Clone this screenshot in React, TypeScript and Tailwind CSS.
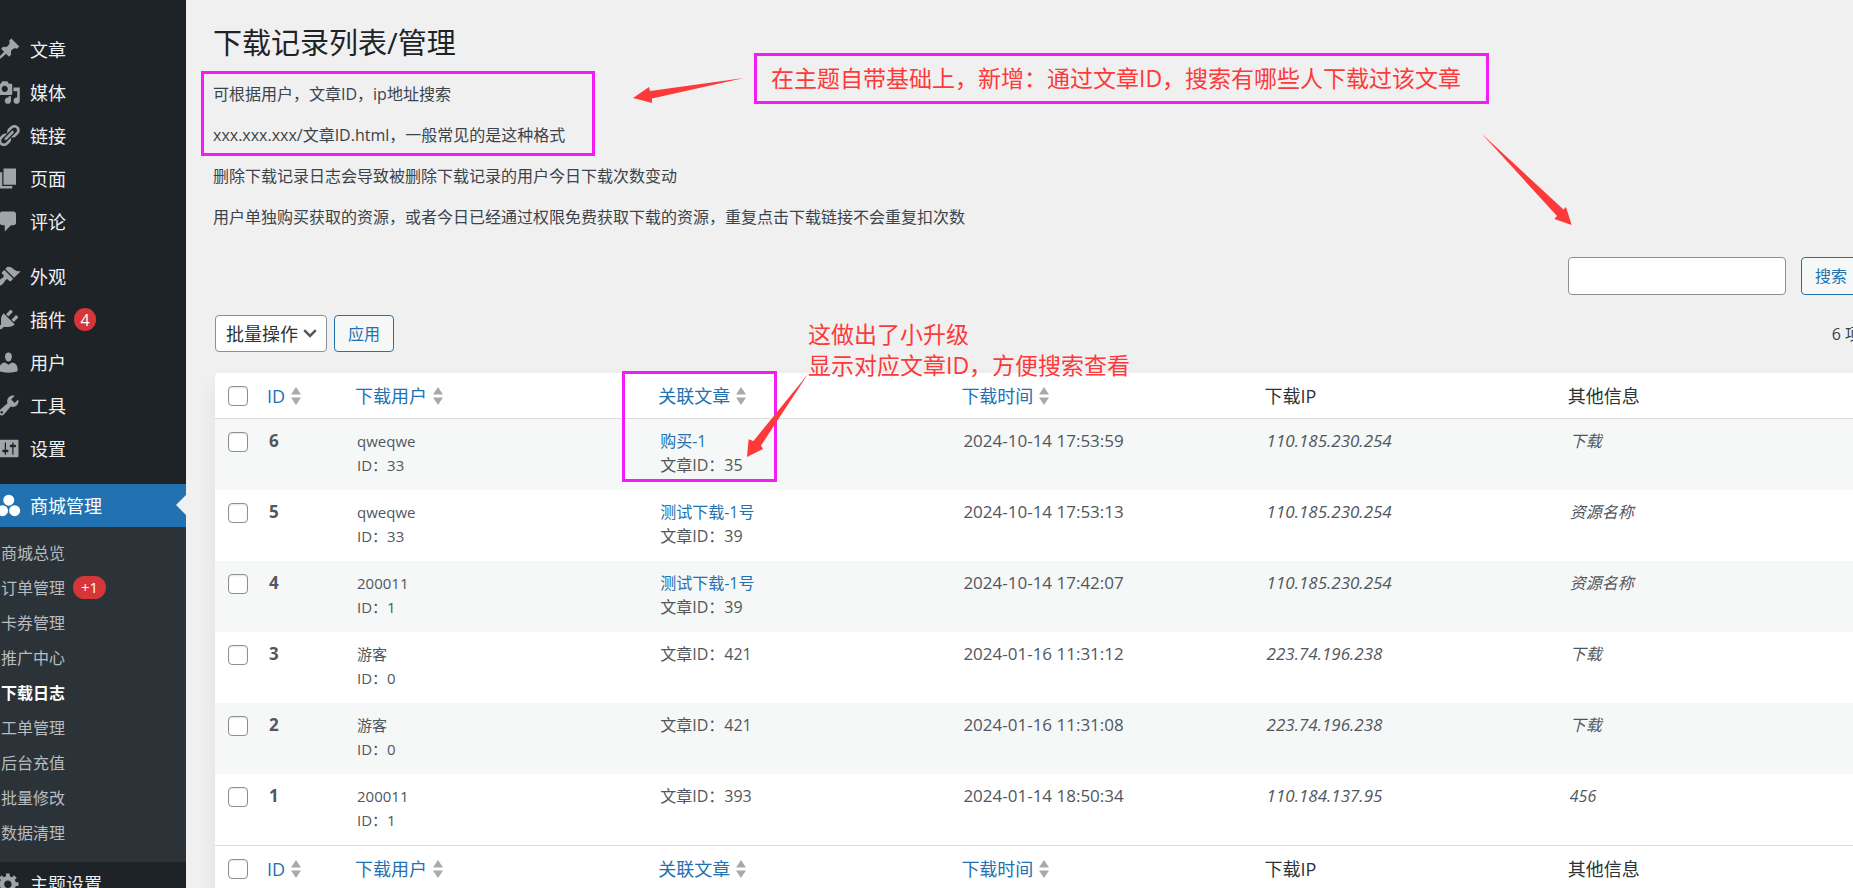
import React from 'react';
import clsx from 'clsx';

interface MenuEntry {
  label: string;
  icon: string;
  badge?: string;
}

interface LogRow {
  id: number;
  user: string;
  userId: number;
  post?: string;
  postId: number;
  time: string;
  ip: string;
  info: string;
}

const contentMenu: MenuEntry[] = [
  {
    label: '文章',
    icon: 'M10.44 3.02l1.82-1.82 6.36 6.35-1.83 1.82c-1.05-.68-2.48-.57-3.41.36l-.75.75c-.92.93-1.04 2.35-.35 3.41l-1.83 1.82-2.41-2.41-2.8 2.79c-.42.42-3.38 2.71-3.8 2.29s1.86-3.39 2.28-3.81l2.79-2.79L4.1 9.36l1.83-1.82c1.05.69 2.48.57 3.4-.36l.75-.75c.93-.92 1.05-2.35.36-3.41z',
  },
  {
    label: '媒体',
    icon: 'M13 11V4c0-.55-.45-1-1-1h-1.67L9 1H5L3.67 3H2c-.55 0-1 .45-1 1v7c0 .55.45 1 1 1h10c.55 0 1-.45 1-1zM7 4.5c1.38 0 2.5 1.12 2.5 2.5S8.38 9.5 7 9.5 4.5 8.38 4.5 7 5.62 4.5 7 4.5zM14 6h5v10.5c0 1.38-1.12 2.5-2.5 2.5S14 17.88 14 16.5s1.12-2.5 2.5-2.5c.17 0 .34.02.5.05V9h-3V6zm-4 8.05V13h2v3.5c0 1.38-1.12 2.5-2.5 2.5S7 17.88 7 16.5 8.12 14 9.5 14c.17 0 .34.02.5.05z',
  },
  {
    label: '链接',
    icon: 'M17.74 2.76c1.68 1.69 1.68 4.41 0 6.1l-1.53 1.52c-1.12 1.12-2.7 1.47-4.14 1.09l2.62-2.61.76-.77.76-.76c.84-.84.84-2.2 0-3.04-.84-.85-2.2-.85-3.04 0l-.77.76-3.38 3.38c-.37-1.44-.02-3.02 1.1-4.14l1.52-1.53c1.69-1.68 4.42-1.68 6.1 0zM8.59 13.43l5.34-5.34c.42-.42.42-1.1 0-1.52-.44-.43-1.13-.39-1.53 0l-5.33 5.34c-.42.42-.42 1.1 0 1.52.44.43 1.13.39 1.52 0zm-.76 2.29l4.14-4.15c.38 1.44.03 3.02-1.09 4.14l-1.52 1.53c-1.69 1.68-4.41 1.68-6.1 0-1.68-1.68-1.68-4.42 0-6.1l1.53-1.52c1.12-1.12 2.7-1.47 4.14-1.1l-4.14 4.15c-.85.84-.85 2.2 0 3.05.84.84 2.2.84 3.04 0z',
  },
  { label: '页面', icon: 'M6 15V2h10v13H6zm-1 1h8v2H3V5h2v11z' },
  {
    label: '评论',
    icon: 'M5 2h9c1.1 0 2 .9 2 2v7c0 1.1-.9 2-2 2h-2l-5 5v-5H5c-1.1 0-2-.9-2-2V4c0-1.1.9-2 2-2z',
  },
];

const systemMenu: MenuEntry[] = [
  {
    label: '外观',
    icon: 'M14.48 11.06L7.41 3.99l1.5-1.5c.5-.56 2.3-.47 3.51.32 1.21.8 1.43 1.28 2.91 2.1 1.18.64 2.45 1.26 4.45.85zm-.71.71L6.7 4.7 4.93 6.47c-.39.39-.39 1.02 0 1.41l1.06 1.06c.39.39.39 1.03 0 1.42-.6.6-1.43 1.11-2.21 1.69-.35.26-.7.53-1.01.84C1.43 14.23.4 16.08 1.4 17.07c.99 1 2.84-.03 4.18-1.36.31-.31.58-.66.85-1.02.57-.78 1.08-1.61 1.69-2.21.39-.39 1.02-.39 1.41 0l1.06 1.06c.39.39 1.02.39 1.41 0z',
  },
  {
    label: '插件',
    badge: '4',
    icon: 'M13.11 4.36L9.87 7.6 8 5.73l3.24-3.24c.35-.34 1.05-.2 1.56.32.52.51.66 1.21.31 1.55zm-8 1.77l.91-1.12 9.01 9.01-1.19.84c-.71.71-2.63 1.16-3.82 1.16H6.14L4.9 17.26c-.59.59-1.54.59-2.12 0-.59-.58-.59-1.53 0-2.12l1.24-1.24v-3.88c0-1.13.4-3.19 1.09-3.89zm7.26 3.97l3.24-3.24c.34-.35 1.04-.21 1.55.31.52.51.66 1.21.31 1.55l-3.24 3.25z',
  },
  {
    label: '用户',
    icon: 'M10 9.25c-2.27 0-2.73-3.44-2.73-3.44C7 4.02 7.82 2 9.97 2c2.16 0 2.98 2.02 2.71 3.81 0 0-.41 3.44-2.68 3.44zm0 2.57L12.72 10c2.39 0 4.52 2.33 4.52 4.53v2.49s-3.65 1.13-7.24 1.13c-3.65 0-7.24-1.13-7.24-1.13v-2.49c0-2.25 1.94-4.48 4.47-4.48z',
  },
  {
    label: '工具',
    icon: 'M16.68 9.77c-1.34 1.34-3.3 1.67-4.95.99l-5.41 6.52c-.99.99-2.59.99-3.58 0s-.99-2.59 0-3.57l6.52-5.42c-.68-1.65-.35-3.61.99-4.95 1.28-1.28 3.12-1.62 4.72-1.06l-2.89 2.89 2.82 2.82 2.86-2.87c.53 1.58.18 3.39-1.08 4.65zM3.81 16.21c.4.39 1.04.39 1.43 0 .4-.4.4-1.04 0-1.43-.39-.4-1.03-.4-1.43 0-.39.39-.39 1.03 0 1.43z',
  },
  {
    label: '设置',
    icon: 'M18 16V4c0-.55-.45-1-1-1H3c-.55 0-1 .45-1 1v12c0 .55.45 1 1 1h14c.55 0 1-.45 1-1zM8 11h1c.55 0 1 .45 1 1s-.45 1-1 1H8v1.5c0 .28-.22.5-.5.5s-.5-.22-.5-.5V13H6c-.55 0-1-.45-1-1s.45-1 1-1h1V5.5c0-.28.22-.5.5-.5s.5.22.5.5V11zm5-2h-1c-.55 0-1-.45-1-1s.45-1 1-1h1V5.5c0-.28.22-.5.5-.5s.5.22.5.5V7h1c.55 0 1 .45 1 1s-.45 1-1 1h-1v5.5c0 .28-.22.5-.5.5s-.5-.22-.5-.5V9z',
  },
];

const shopEntry: MenuEntry = {
  label: '商城管理',
  icon: 'M10.2 1.3a4.4 4.4 0 1 1 0 8.8 4.4 4.4 0 0 1 0-8.8zM5.2 9.7a4.4 4.4 0 1 1 0 8.8 4.4 4.4 0 0 1 0-8.8zM14.9 9.7a4.4 4.4 0 1 1 0 8.8 4.4 4.4 0 0 1 0-8.8z',
};

const themeEntry: MenuEntry = {
  label: '主题设置',
  icon: 'M18 12h-2.18c-.17.7-.44 1.35-.81 1.93l1.54 1.54-2.1 2.1-1.54-1.54c-.58.36-1.23.63-1.91.79V19H8v-2.18c-.68-.16-1.33-.43-1.91-.79l-1.54 1.54-2.12-2.12 1.54-1.54c-.36-.58-.63-1.23-.79-1.91H1V9.03h2.17c.16-.7.44-1.35.8-1.94L2.43 5.55l2.1-2.1 1.54 1.54c.58-.37 1.24-.64 1.93-.81V2h3v2.18c.68.16 1.33.43 1.91.79l1.54-1.54 2.12 2.12-1.54 1.54c.36.59.64 1.24.8 1.94H18V12zm-8.5 1.5c1.66 0 3-1.34 3-3s-1.34-3-3-3-3 1.34-3 3 1.34 3 3 3z',
};

const submenu = [
  { label: '商城总览' },
  { label: '订单管理', badge: '+1' },
  { label: '卡券管理' },
  { label: '推广中心' },
  { label: '下载日志', active: true },
  { label: '工单管理' },
  { label: '后台充值' },
  { label: '批量修改' },
  { label: '数据清理' },
];

const notes = [
  '可根据用户，文章ID，ip地址搜索',
  'xxx.xxx.xxx/文章ID.html，一般常见的是这种格式',
  '删除下载记录日志会导致被删除下载记录的用户今日下载次数变动',
  '用户单独购买获取的资源，或者今日已经通过权限免费获取下载的资源，重复点击下载链接不会重复扣次数',
];

const columns = [
  { label: 'ID', sortable: true },
  { label: '下载用户', sortable: true },
  { label: '关联文章', sortable: true },
  { label: '下载时间', sortable: true },
  { label: '下载IP', sortable: false },
  { label: '其他信息', sortable: false },
];

const rows: LogRow[] = [
  { id: 6, user: 'qweqwe', userId: 33, post: '购买-1', postId: 35, time: '2024-10-14 17:53:59', ip: '110.185.230.254', info: '下载' },
  { id: 5, user: 'qweqwe', userId: 33, post: '测试下载-1号', postId: 39, time: '2024-10-14 17:53:13', ip: '110.185.230.254', info: '资源名称' },
  { id: 4, user: '200011', userId: 1, post: '测试下载-1号', postId: 39, time: '2024-10-14 17:42:07', ip: '110.185.230.254', info: '资源名称' },
  { id: 3, user: '游客', userId: 0, postId: 421, time: '2024-01-16 11:31:12', ip: '223.74.196.238', info: '下载' },
  { id: 2, user: '游客', userId: 0, postId: 421, time: '2024-01-16 11:31:08', ip: '223.74.196.238', info: '下载' },
  { id: 1, user: '200011', userId: 1, postId: 393, time: '2024-01-14 18:50:34', ip: '110.184.137.95', info: '456' },
];

function MenuItem({ entry, active }: { entry: MenuEntry; active?: boolean }) {
  return (
    <a
      href="#"
      className={clsx(
        'relative flex h-[43px] items-center text-lg leading-6',
        active ? 'bg-[#2271b1] text-white' : 'text-[#f0f0f1]'
      )}
    >
      <svg
        viewBox="0 0 20 20"
        className={clsx('-ml-1 mr-[9px] size-[25px] shrink-0', active ? 'fill-white' : 'fill-[#a0a5aa]')}
      >
        <path d={entry.icon} />
      </svg>
      {entry.label}
      {entry.badge && (
        <span className="ml-2 flex h-[23px] min-w-[22px] items-center justify-center rounded-full bg-[#d63638] text-base text-white">
          {entry.badge}
        </span>
      )}
      {active && (
        <span className="absolute right-0 top-[11px] border-y-10 border-r-10 border-y-transparent border-r-[#f0f0f0]" />
      )}
    </a>
  );
}

function Sidebar() {
  return (
    <nav className="w-[186px] shrink-0 bg-[#1d2327] pt-7">
      {contentMenu.map((entry) => (
        <MenuItem key={entry.label} entry={entry} />
      ))}
      <div className="h-3" />
      {systemMenu.map((entry) => (
        <MenuItem key={entry.label} entry={entry} />
      ))}
      <div className="h-[14px]" />
      <MenuItem entry={shopEntry} active />
      <ul className="bg-[#2c3338] pb-3 pt-2">
        {submenu.map((item) => (
          <li key={item.label}>
            <a
              href="#"
              className={clsx(
                'flex h-[35px] items-center pl-px text-base',
                item.active ? 'font-bold text-white' : 'text-[#b8bcc0]'
              )}
            >
              {item.label}
              {item.badge && (
                <span className="ml-2 flex h-[23px] items-center rounded-full bg-[#d63638] px-2 text-[15px] text-white">
                  {item.badge}
                </span>
              )}
            </a>
          </li>
        ))}
      </ul>
      <MenuItem entry={themeEntry} />
    </nav>
  );
}

function Checkbox({ label }: { label: string }) {
  return (
    <input
      type="checkbox"
      aria-label={label}
      className="block size-5 appearance-none rounded border border-[#8c8f94] bg-white shadow-[inset_0_1px_2px_rgba(0,0,0,0.1)] checked:bg-[#2271b1]"
    />
  );
}

function HeadingRow({ position }: { position: 'top' | 'bottom' }) {
  const border = position === 'top' ? 'border-b border-[#dcdcde]' : 'border-t border-[#dcdcde]';

  return (
    <tr className="h-[46px]">
      <td className={clsx('pl-[13px]', border)}>
        <Checkbox label={`全选 ${position}`} />
      </td>
      {columns.map((column) => (
        <th
          key={column.label}
          scope="col"
          className={clsx('pl-[10px] text-left text-lg font-normal leading-6 text-[#2c3338]', border)}
        >
          {column.sortable ? (
            <a href="#" className="flex items-center gap-1.5 text-[#2271b1]">
              {column.label}
              <svg viewBox="0 0 10 18" className="h-[18px] w-[10px] fill-[#a7aaad]">
                <path d="M5 0l5 7.500H0zM0 10.500h10L5 18z" />
              </svg>
            </a>
          ) : (
            column.label
          )}
        </th>
      ))}
    </tr>
  );
}

function LogTable() {
  return (
    <table className="mt-[21px] w-full table-fixed border-separate border-spacing-0 rounded bg-white shadow-[0_10px_20px_rgba(0,0,0,0.07)]">
      <colgroup>
        <col className="w-[42px]" />
        <col className="w-[88px]" />
        <col />
        <col />
        <col />
        <col />
        <col />
      </colgroup>
      <thead>
        <HeadingRow position="top" />
      </thead>
      <tbody className="leading-6 text-[#50575e]">
        {rows.map((row) => (
          <tr key={row.id} className="h-[71px] align-top odd:bg-[#f6f7f7]">
            <td className="pl-[13px] pt-[13px]">
              <Checkbox label={`选择 ${row.id}`} />
            </td>
            <td className="pl-3 pt-[10px] text-[17px] font-bold">{row.id}</td>
            <td className="pl-3 pt-[10px] text-[15px]">
              {row.user}
              <br />
              ID：{row.userId}
            </td>
            <td className="pl-3 pt-[10px] text-base">
              {row.post && (
                <a href="#" className="block text-[#2271b1]">
                  {row.post}
                </a>
              )}
              文章ID：{row.postId}
            </td>
            <td className="pl-3 pt-[10px] text-[17px]">{row.time}</td>
            <td className="pl-3 pt-[10px] text-[17px] italic">{row.ip}</td>
            <td className="pl-3 pt-[10px] text-base italic">{row.info}</td>
          </tr>
        ))}
      </tbody>
      <tfoot>
        <HeadingRow position="bottom" />
      </tfoot>
    </table>
  );
}

// Marker boxes, captions and arrows drawn over the page
function Annotations() {
  return (
    <div className="pointer-events-none absolute inset-0 text-[23px] text-[#fd3a39]">
      <div className="absolute left-[201px] top-[71px] h-[85px] w-[394px] border-3 border-[#f41cf4]" />
      <div className="absolute left-[754px] top-[53px] flex h-[51px] w-[735px] items-center whitespace-nowrap border-3 border-[#f41cf4] pl-[14px]">
        在主题自带基础上，新增：通过文章ID，搜索有哪些人下载过该文章
      </div>
      <div className="absolute left-[622px] top-[371px] h-[111px] w-[155px] border-3 border-[#f41cf4]" />
      <p className="absolute left-[808px] top-[319px] whitespace-nowrap leading-[31px]">
        这做出了小升级
        <br />
        显示对应文章ID，方便搜索查看
      </p>
      <svg className="absolute left-0 top-0 h-[480px] w-[1600px] fill-[#fd3a39]">
        <path d="M744 78L652 98.500V103L633 98L649 87L650 91Z" />
        <path d="M1482 134L1563.500 209.500L1566 207L1571.700 225L1554.300 219L1557 216Z" />
        <path d="M808 374L761 445.500L763 449L747 457L748.600 439.300L753.500 441Z" />
      </svg>
    </div>
  );
}

export default function App() {
  return (
    <div className="relative flex h-screen overflow-hidden bg-[#f0f0f0] font-['Open_Sans','Noto_Sans_CJK_SC',sans-serif] text-[#3c434a]">
      <Sidebar />
      <main className="-mr-2 min-w-0 flex-1 pl-[27px] pt-[23px]">
        <h1 className="text-[29px] leading-10 text-[#1d2327]">下载记录列表/管理</h1>
        <div className="mt-[19px] flex flex-col gap-[17px] text-base leading-6">
          {notes.map((note) => (
            <p key={note}>{note}</p>
          ))}
        </div>

        <div className="ml-0.5 mt-7">
          <form className="flex justify-end gap-[15px]">
            <input
              type="search"
              aria-label="搜索"
              className="h-[38px] w-[218px] rounded border border-[#8c8f94] bg-white px-2"
            />
            <button type="button" className="h-[38px] w-[60px] rounded border border-[#2271b1] bg-[#f6f7f7] text-base text-[#2271b1]">
              搜索
            </button>
          </form>

          <div className="mt-5 flex items-center gap-[7px]">
            <div className="relative">
              <select
                aria-label="批量操作"
                className="h-[37px] w-[112px] appearance-none rounded border border-[#8c8f94] bg-white pl-[10px] text-lg leading-6 text-[#2c3338]"
              >
                <option>批量操作</option>
              </select>
              <svg viewBox="0 0 14 9" className="pointer-events-none absolute right-[10px] top-[14px] h-[9px] w-[14px] fill-none stroke-[#50575e] stroke-[2.5]">
                <path d="M1.200 1.200L7 7L12.800 1.200" />
              </svg>
            </div>
            <button type="button" className="h-[37px] w-[60px] rounded border border-[#2271b1] bg-[#f6f7f7] text-base text-[#2271b1]">
              应用
            </button>
            <span className="ml-auto text-base">6 项</span>
          </div>

          <LogTable />
        </div>
      </main>
      <Annotations />
    </div>
  );
}
